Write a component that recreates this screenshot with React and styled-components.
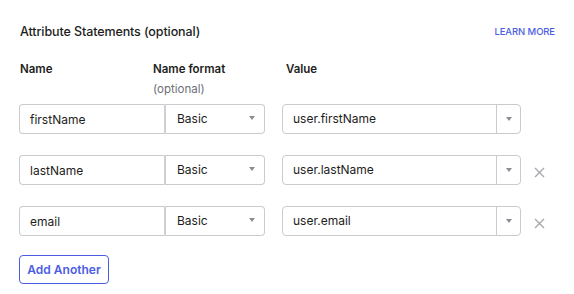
import React from 'react'
import styled, { createGlobalStyle } from 'styled-components'

const GlobalStyle = createGlobalStyle`
  body {
    margin: 0;
    background: #ffffff;
    font-family: 'Inter', 'Liberation Sans', sans-serif;
    color: #1d1d21;
  }
`

const Panel = styled.section`
  width: 574px;
  height: 294px;
  box-sizing: border-box;
  padding: 23px 19px 0 19px;
`

const TitleRow = styled.div`
  display: flex;
  align-items: center;
  justify-content: space-between;
  height: 16px;
`

const Title = styled.h2`
  margin: 0 0 0 1px;
  font-size: 12.5px;
  font-weight: 500;
  letter-spacing: -0.1px;
`

const LearnMore = styled.a`
  font-size: 9.5px;
  font-weight: 500;
  color: #4b5de4;
  text-decoration: none;
  letter-spacing: -0.1px;
`

const Headers = styled.div`
  display: flex;
  margin-top: 22px;
  padding-left: 1px;
`

const HeaderCell = styled.div`
  width: 133px;
  font-size: 11.5px;
  font-weight: 600;
  line-height: 16px;
`

const Optional = styled.div`
  margin-top: 4px;
  font-size: 11.5px;
  font-weight: 400;
  color: #6e6e78;
`

const Rows = styled.div`
  display: flex;
  flex-direction: column;
  gap: 21px;
  margin-top: 7px;
`

const Row = styled.div`
  display: flex;
  align-items: center;
  height: 30px;
`

const NameInput = styled.div`
  box-sizing: border-box;
  width: 145px;
  height: 30px;
  display: flex;
  align-items: center;
  padding-left: 10px;
  font-size: 12px;
  border: 1px solid #cbcbcf;
  border-right: none;
  border-radius: 4px 0 0 4px;
`

const FormatSelect = styled.div`
  box-sizing: border-box;
  width: 101px;
  height: 30px;
  display: flex;
  align-items: center;
  justify-content: space-between;
  padding: 0 9px 2px 11px;
  font-size: 12px;
  border: 1px solid #cbcbcf;
  border-left: 2px solid #d0d0d4;
  border-radius: 0 4px 4px 0;
`

const ValueSelect = styled.div`
  box-sizing: border-box;
  width: 239px;
  height: 30px;
  margin-left: 17px;
  display: flex;
  border: 1px solid #cbcbcf;
  border-radius: 4px;
`

const ValueText = styled.div`
  flex: 1;
  display: flex;
  align-items: center;
  padding: 0 0 2px 10px;
  font-size: 12px;
`

const ArrowCell = styled.div`
  width: 23px;
  display: flex;
  align-items: center;
  justify-content: center;
  border-left: 1px solid #cbcbcf;
`

const Caret = styled.span`
  width: 0;
  height: 0;
  border-left: 3px solid transparent;
  border-right: 3px solid transparent;
  border-top: 4px solid #8c8c94;
`

const Remove = styled.button`
  margin: 4px 0 0 13px;
  padding: 0;
  border: none;
  background: none;
  width: 11px;
  height: 11px;
  display: flex;
  cursor: pointer;
`

const AddButton = styled.button`
  margin-top: 19px;
  width: 90px;
  height: 29px;
  box-sizing: border-box;
  border: 1px solid #4b5de4;
  border-radius: 4px;
  background: #ffffff;
  color: #4b5de4;
  font-family: inherit;
  font-size: 12px;
  font-weight: 600;
  padding: 0 0 1px;
`

const rows = [
  { name: 'firstName', value: 'user.firstName', removable: false },
  { name: 'lastName', value: 'user.lastName', removable: true },
  { name: 'email', value: 'user.email', removable: true },
]

export default function App() {
  return (
    <>
      <GlobalStyle />
      <Panel>
        <TitleRow>
          <Title>Attribute Statements (optional)</Title>
          <LearnMore href="#">LEARN MORE</LearnMore>
        </TitleRow>

        <Headers>
          <HeaderCell>Name</HeaderCell>
          <HeaderCell>
            Name format
            <Optional>(optional)</Optional>
          </HeaderCell>
          <HeaderCell>Value</HeaderCell>
        </Headers>

        <Rows>
          {rows.map((r) => (
            <Row key={r.name}>
              <NameInput>{r.name}</NameInput>
              <FormatSelect>
                Basic
                <Caret />
              </FormatSelect>
              <ValueSelect>
                <ValueText>{r.value}</ValueText>
                <ArrowCell>
                  <Caret />
                </ArrowCell>
              </ValueSelect>
              {r.removable && (
                <Remove aria-label="remove">
                  <svg width="11" height="11" viewBox="0 0 11 11">
                    <path d="M1 1L10 10M10 1L1 10" stroke="#a8a8ae" strokeWidth="1.4" />
                  </svg>
                </Remove>
              )}
            </Row>
          ))}
        </Rows>

        <AddButton>Add Another</AddButton>
      </Panel>
    </>
  )
}
